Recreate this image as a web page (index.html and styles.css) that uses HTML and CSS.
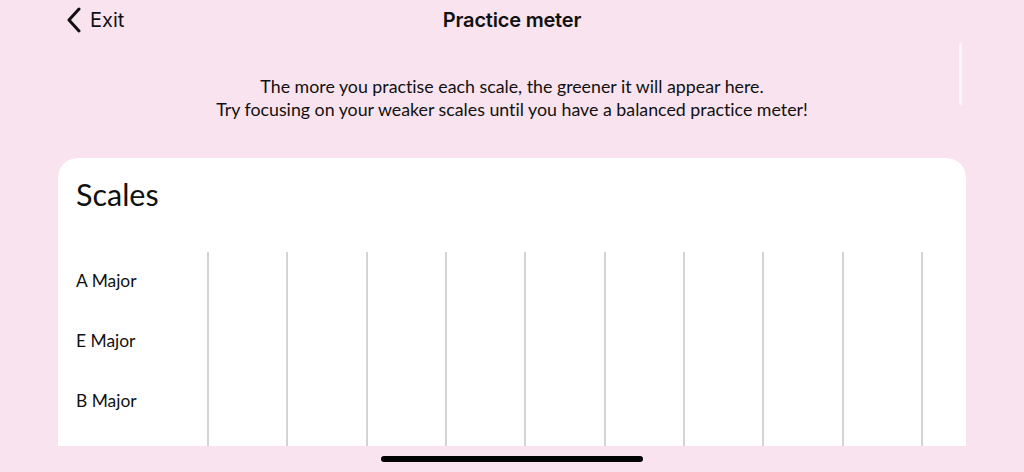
FILE: index.html
```html
<!DOCTYPE html>
<html lang="en">
<head>
<meta charset="utf-8">
<title>Practice meter</title>
<link rel="stylesheet" href="styles.css">
</head>
<body>
<div class="screen">
  <header class="topbar">
    <a class="back">
      <svg class="chev" width="16" height="26" viewBox="0 0 16 26" aria-hidden="true">
        <path d="M13 2 L3 13 L13 24" fill="none" stroke="#111" stroke-width="3" stroke-linecap="round" stroke-linejoin="round"/>
      </svg>
      <span class="back-label">Exit</span>
    </a>
    <h1 class="title">Practice meter</h1>
  </header>

  <p class="intro">The more you practise each scale, the greener it will appear here.<br>Try focusing on your weaker scales until you have a balanced practice meter!</p>

  <section class="card">
    <h2 class="card-title">Scales</h2>
    <div class="grid">
      <div class="row"><div class="label">A Major</div><div class="cell"></div><div class="cell"></div><div class="cell"></div><div class="cell"></div><div class="cell"></div><div class="cell"></div><div class="cell"></div><div class="cell"></div><div class="cell"></div><div class="cell"></div></div>
      <div class="row"><div class="label">E Major</div><div class="cell"></div><div class="cell"></div><div class="cell"></div><div class="cell"></div><div class="cell"></div><div class="cell"></div><div class="cell"></div><div class="cell"></div><div class="cell"></div><div class="cell"></div></div>
      <div class="row"><div class="label">B Major</div><div class="cell"></div><div class="cell"></div><div class="cell"></div><div class="cell"></div><div class="cell"></div><div class="cell"></div><div class="cell"></div><div class="cell"></div><div class="cell"></div><div class="cell"></div></div>
      <div class="row"><div class="label"></div><div class="cell"></div><div class="cell"></div><div class="cell"></div><div class="cell"></div><div class="cell"></div><div class="cell"></div><div class="cell"></div><div class="cell"></div><div class="cell"></div><div class="cell"></div></div>
    </div>
  </section>

  <div class="scroll-indicator"></div>
  <div class="home-indicator"></div>
</div>
</body>
</html>
```

FILE: styles.css
```css
html, body {
  margin: 0;
  padding: 0;
}
body {
  background: #f8e3ee;
  font-family: Lato, "Open Sans", sans-serif;
  font-variant-ligatures: none;
  color: #111;
}
.screen {
  position: relative;
  width: 1024px;
  height: 472px;
  overflow: hidden;
  display: flex;
  flex-direction: column;
}
.topbar {
  position: relative;
  height: 40px;
  display: flex;
  align-items: center;
  justify-content: center;
}
.back {
  position: absolute;
  left: 66px;
  top: 7px;
  display: flex;
  align-items: center;
  gap: 8px;
  color: #111;
  font-family: Inter, Roboto, sans-serif;
  font-size: 20px;
}
.chev {
  display: block;
}
.back-label {
  line-height: 26px;
}
.title {
  margin: 0;
  font-family: Inter, Roboto, sans-serif;
  font-weight: 600;
  font-size: 20px;
  letter-spacing: -0.2px;
  line-height: 40px;
}
.intro {
  margin: 35px 0 0;
  text-align: center;
  font-size: 17.8px;
  line-height: 23px;
}
.card {
  margin: 37px 0 0 58px;
  width: 908px;
  flex: 0 0 288px;
  background: #fff;
  border-radius: 20px 20px 0 0;
  overflow: hidden;
}
.card-title {
  margin: 0;
  padding: 17px 0 0 18px;
  height: 94px;
  box-sizing: border-box;
  font-weight: 400;
  font-size: 30.5px;
  line-height: 38px;
}
.grid {
  display: flex;
  flex-direction: column;
}
.row {
  display: flex;
  height: 60px;
}
.label {
  flex: 0 0 131px;
  padding-left: 18px;
  padding-bottom: 4px;
  box-sizing: border-box;
  display: flex;
  align-items: center;
  font-size: 17.4px;
}
.label {
  flex-basis: 149px;
}
.cell {
  flex: 0 0 79.33px;
  box-sizing: border-box;
  border-left: 2px solid #d4d4d4;
}
.scroll-indicator {
  position: absolute;
  left: 959px;
  top: 43px;
  width: 3px;
  height: 62px;
  border-radius: 2px;
  background: rgba(255, 255, 255, 0.65);
}
.home-indicator {
  position: absolute;
  left: 381px;
  top: 456px;
  width: 262px;
  height: 6px;
  border-radius: 3px;
  background: #000;
}
```
